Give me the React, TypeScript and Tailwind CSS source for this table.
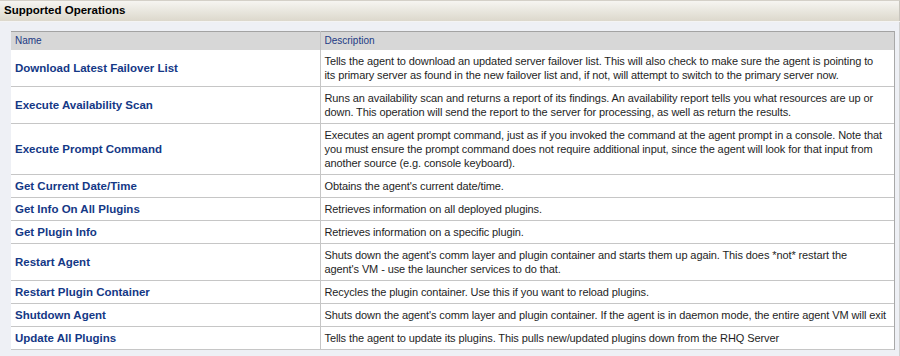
const operations = [
  {
    name: "Download Latest Failover List",
    lines: [
      "Tells the agent to download an updated server failover list. This will also check to make sure the agent is pointing to",
      "its primary server as found in the new failover list and, if not, will attempt to switch to the primary server now.",
    ],
  },
  {
    name: "Execute Availability Scan",
    lines: [
      "Runs an availability scan and returns a report of its findings. An availability report tells you what resources are up or",
      "down. This operation will send the report to the server for processing, as well as return the results.",
    ],
  },
  {
    name: "Execute Prompt Command",
    lines: [
      "Executes an agent prompt command, just as if you invoked the command at the agent prompt in a console. Note that",
      "you must ensure the prompt command does not require additional input, since the agent will look for that input from",
      "another source (e.g. console keyboard).",
    ],
  },
  { name: "Get Current Date/Time", lines: ["Obtains the agent's current date/time."] },
  { name: "Get Info On All Plugins", lines: ["Retrieves information on all deployed plugins."] },
  { name: "Get Plugin Info", lines: ["Retrieves information on a specific plugin."] },
  {
    name: "Restart Agent",
    lines: [
      "Shuts down the agent's comm layer and plugin container and starts them up again. This does *not* restart the",
      "agent's VM - use the launcher services to do that.",
    ],
  },
  { name: "Restart Plugin Container", lines: ["Recycles the plugin container. Use this if you want to reload plugins."] },
  {
    name: "Shutdown Agent",
    lines: ["Shuts down the agent's comm layer and plugin container. If the agent is in daemon mode, the entire agent VM will exit"],
  },
  { name: "Update All Plugins", lines: ["Tells the agent to update its plugins. This pulls new/updated plugins down from the RHQ Server"] },
]

export default function App() {
  return (
    <div className="w-[900px] h-[356px] overflow-hidden bg-[#eef0f5] font-['Liberation_Sans',Arial,sans-serif]">
      <div className="h-[21px] border-t border-[#d4d0c8] bg-gradient-to-b from-[#f6f5f1] to-[#dcd8cc] border-r border-r-[#c8c5bd] pl-[4px] flex items-center">
        <h1 className="text-[11.5px] font-bold text-black">Supported Operations</h1>
      </div>
      <div className="h-px bg-[#f4f4f4]"></div>
      <div className="pl-[11px] pr-[5px] pt-[9px] border-r border-[#d0d0d0] h-[334px]">
        <table className="w-[884px] border-collapse bg-white table-fixed">
          <thead>
            <tr className="bg-[#d7d7d7] border-t border-[#a3a3a3]">
              <th className="w-[309px] text-left font-normal text-[10px] text-[#1c3a84] px-[4px] h-[18px] border-r border-[#c2c2c2]">
                Name
              </th>
              <th className="text-left font-normal text-[10px] text-[#1c3a84] px-[4px] h-[18px] border-r border-[#a8a8a8]">
                Description
              </th>
            </tr>
          </thead>
          <tbody>
            {operations.map((op) => (
              <tr key={op.name} className="border-b border-[#c6c6c6]">
                <td className="px-[4px] py-[4px] text-[11.5px] font-bold text-[#143886] leading-[14px] border-r border-[#c6c6c6]">
                  {op.name}
                </td>
                <td className="pl-[4px] pr-[2px] py-[4px] text-[11px] text-[#1e1e1e] leading-[14px] border-r border-[#a8a8a8] whitespace-nowrap overflow-hidden tracking-[-0.1px]">
                  {op.lines.map((line) => (
                    <div key={line}>{line}</div>
                  ))}
                </td>
              </tr>
            ))}
          </tbody>
        </table>
      </div>
    </div>
  )
}
